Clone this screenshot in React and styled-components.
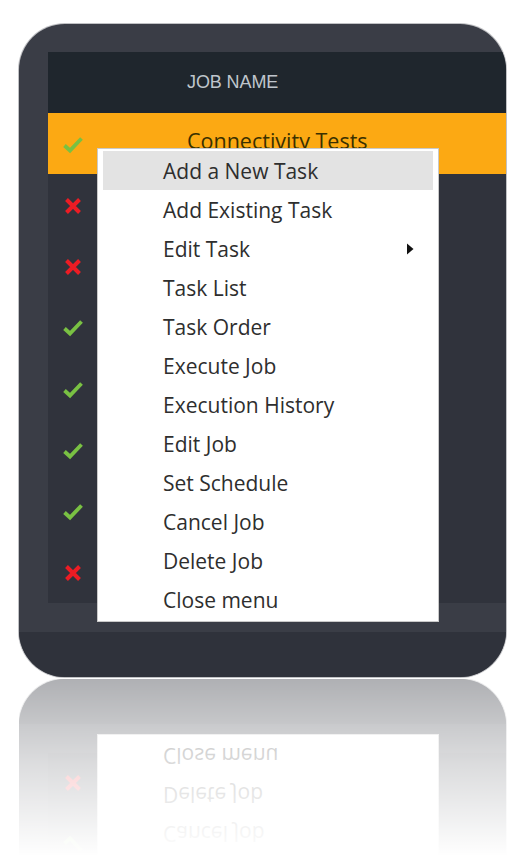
import React from 'react';
import styled, { createGlobalStyle } from 'styled-components';

const GlobalStyle = createGlobalStyle`
	html, body {
		margin: 0;
		background: #fff;
	}
	body {
		font-family: "Open Sans", "Noto Sans", sans-serif;
	}
`;

const jobs = [
	{ ok: true, name: 'Connectivity Tests', active: true },
	{ ok: false },
	{ ok: false },
	{ ok: true },
	{ ok: true },
	{ ok: true },
	{ ok: true },
	{ ok: false },
];

const menuItems = [
	{ label: 'Add a New Task', hover: true },
	{ label: 'Add Existing Task' },
	{ label: 'Edit Task', sub: true },
	{ label: 'Task List' },
	{ label: 'Task Order' },
	{ label: 'Execute Job' },
	{ label: 'Execution History' },
	{ label: 'Edit Job' },
	{ label: 'Set Schedule' },
	{ label: 'Cancel Job' },
	{ label: 'Delete Job' },
	{ label: 'Close menu' },
];

const CheckIcon = () => (
	<svg width="20" height="18" viewBox="0 0 20 18">
		<path d="M1.5 9.5 L7 14.5 L18.5 2.5" fill="none" stroke="#79c143" strokeWidth="3.8" />
	</svg>
);

const CrossIcon = () => (
	<svg width="18" height="18" viewBox="0 0 18 18">
		<path d="M2.5 2.5 L15.5 15.5 M15.5 2.5 L2.5 15.5" fill="none" stroke="#ec1c24" strokeWidth="4" />
	</svg>
);

const SubArrow = () => (
	<svg width="8" height="12" viewBox="0 0 8 12">
		<path d="M1 0.5 L7.5 6 L1 11.5 Z" fill="#111" />
	</svg>
);

// the whole framed screen, drawn once normally and once flipped as the reflection
const DeviceBody = () => (
	<Device>
		<Table>
			<HeaderRow>
				<IconCell />
				<HeaderCell>Job Name</HeaderCell>
			</HeaderRow>
			{jobs.map((job, i) => (
				<Row key={i} $active={job.active}>
					<IconCell>{job.ok ? <CheckIcon /> : <CrossIcon />}</IconCell>
					<NameCell>{job.name}</NameCell>
				</Row>
			))}
		</Table>
		<Footer />
		<Menu>
			{menuItems.map((item) => (
				<MenuItem key={item.label} $hover={item.hover}>
					{item.label}
					{item.sub && (
						<Arrow>
							<SubArrow />
						</Arrow>
					)}
				</MenuItem>
			))}
		</Menu>
	</Device>
);

const App = () => {
	return (
		<Page>
			<GlobalStyle />
			<DeviceBody />
			<Reflection aria-hidden="true">
				<Flipped>
					<DeviceBody />
				</Flipped>
			</Reflection>
		</Page>
	);
};

const Page = styled.div`
	padding: 24px 0 0 19px;
`;

const Device = styled.div`
	position: relative;
	display: flex;
	flex-direction: column;
	box-sizing: border-box;
	width: 487px;
	height: 653px;
	padding-top: 28px;
	border-radius: 46px;
	background: #3a3d46;
	overflow: hidden;
	box-shadow: 0 0 0 1px rgba(140, 142, 148, 0.55);
`;

const Reflection = styled.div`
	position: relative;
	width: 488px;
	height: 188px;
	margin-top: 2px;
	overflow: hidden;
	opacity: 0.38;

	&::after {
		content: '';
		position: absolute;
		inset: 0;
		background: linear-gradient(to bottom, rgba(255, 255, 255, 0) 0%, rgba(255, 255, 255, 0.55) 45%, #fff 94%);
	}
`;

const Flipped = styled.div`
	transform: scaleY(-1);
`;

const Table = styled.div`
	display: flex;
	flex-direction: column;
	margin: 0 0 29px 29px;
`;

const HeaderRow = styled.div`
	display: grid;
	grid-template-columns: 50px 1fr;
	align-items: center;
	height: 61px;
	background: #1f262d;
`;

const HeaderCell = styled.div`
	padding-left: 89px;
	font-family: "Liberation Sans", Arial, sans-serif;
	font-size: 18px;
	letter-spacing: -0.1px;
	text-transform: uppercase;
	color: #bfc5cc;
`;

const Row = styled.div`
	display: grid;
	grid-template-columns: 50px 1fr;
	align-items: center;
	height: 61.25px;
	background: ${({ $active }) => ($active ? '#fca913' : '#30333c')};
	color: ${({ $active }) => ($active ? '#3a3000' : '#d8dbe0')};
`;

const IconCell = styled.div`
	display: flex;
	align-items: center;
	justify-content: center;
	padding-top: 2px;
`;

const NameCell = styled.div`
	padding-left: 89px;
	padding-bottom: 6px;
	font-size: 21.5px;
	white-space: nowrap;
`;

const Footer = styled.div`
	flex: 1;
	background: #2f323b;
`;

const Menu = styled.div`
	position: absolute;
	left: 78px;
	top: 124px;
	box-sizing: border-box;
	width: 342px;
	height: 474px;
	padding: 2px 5px;
	background: #fff;
	border: 1px solid #c9c9c9;
`;

const MenuItem = styled.div`
	position: relative;
	display: flex;
	align-items: center;
	height: 39px;
	padding-left: 60px;
	font-size: 21px;
	color: #2e2e2e;
	background: ${({ $hover }) => ($hover ? '#e3e3e3' : 'transparent')};
`;

const Arrow = styled.span`
	position: absolute;
	right: 19px;
	top: 14px;
	display: flex;
`;

export default App;
